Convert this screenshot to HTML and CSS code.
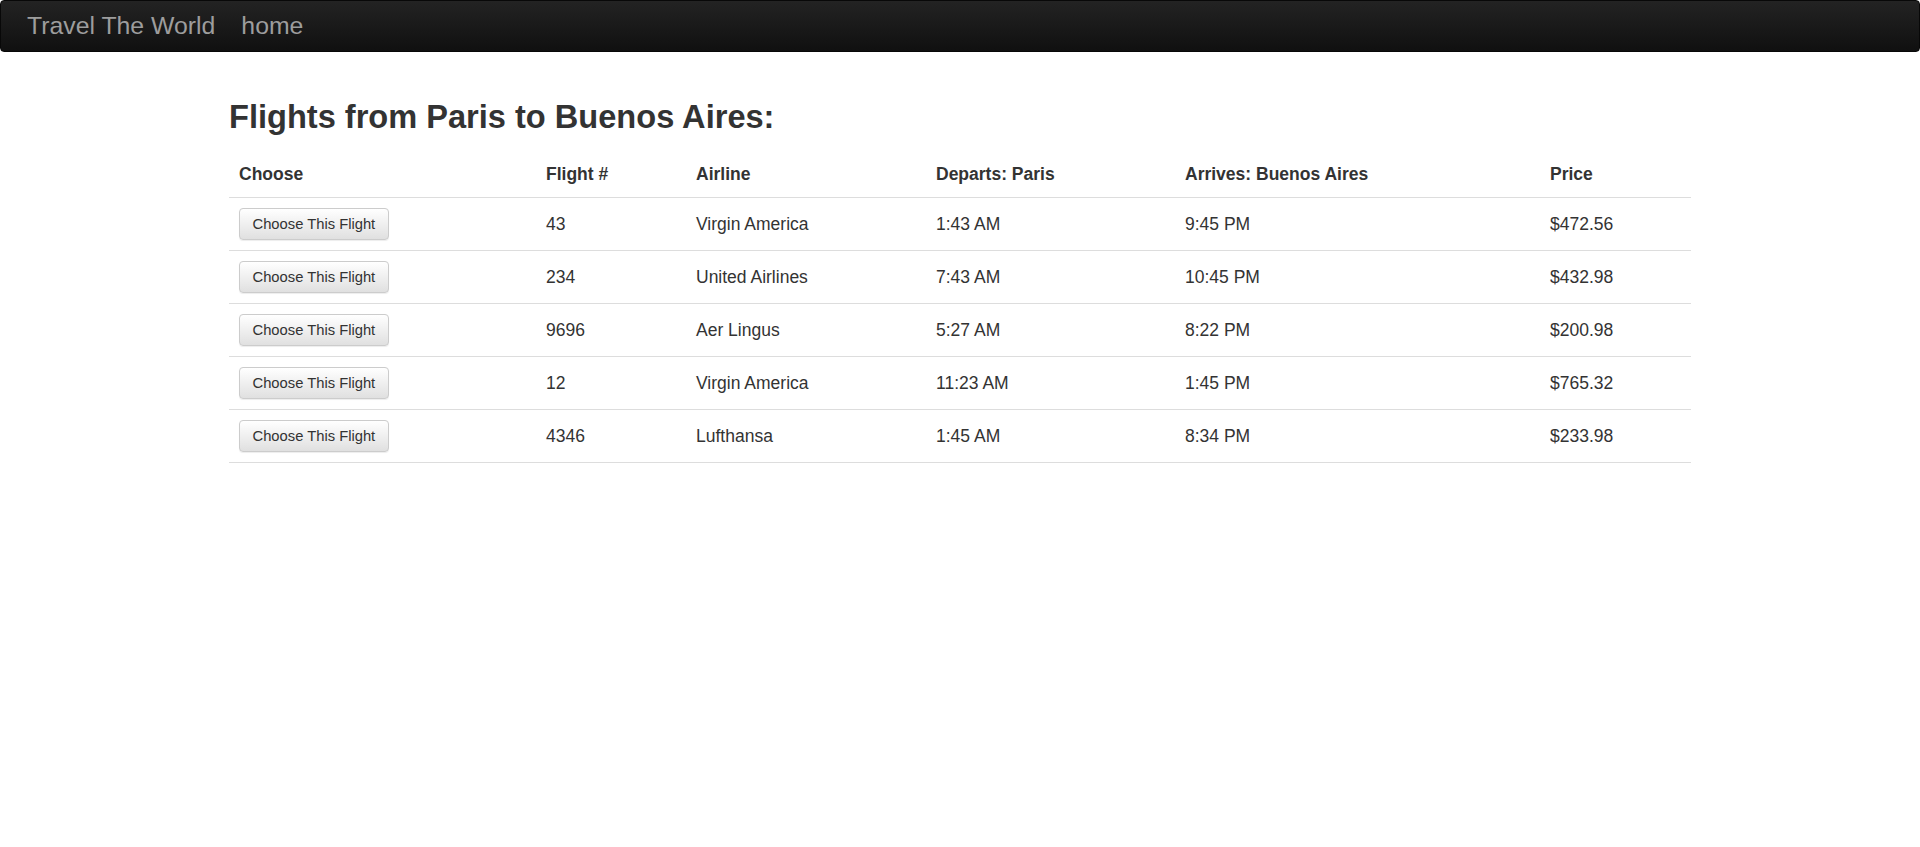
FILE: index.html
```html
<!DOCTYPE html>
<html>
<head>
<meta charset="utf-8">
<title>Travel The World</title>
<link rel="stylesheet" href="styles.css">
</head>
<body>
<nav class="navbar">
  <a class="brand" href="#">Travel The World</a>
  <a class="nav-link" href="#">home</a>
</nav>
<main class="container">
  <h3 class="title">Flights from Paris to Buenos Aires:</h3>
  <table class="flights">
    <colgroup>
      <col class="c1"><col class="c2"><col class="c3"><col class="c4"><col class="c5"><col class="c6">
    </colgroup>
    <thead>
      <tr><th>Choose</th><th>Flight #</th><th>Airline</th><th>Departs: Paris</th><th>Arrives: Buenos Aires</th><th>Price</th></tr>
    </thead>
    <tbody>
      <tr><td><button class="btn">Choose This Flight</button></td><td>43</td><td>Virgin America</td><td>1:43 AM</td><td>9:45 PM</td><td>$472.56</td></tr>
      <tr><td><button class="btn">Choose This Flight</button></td><td>234</td><td>United Airlines</td><td>7:43 AM</td><td>10:45 PM</td><td>$432.98</td></tr>
      <tr><td><button class="btn">Choose This Flight</button></td><td>9696</td><td>Aer Lingus</td><td>5:27 AM</td><td>8:22 PM</td><td>$200.98</td></tr>
      <tr><td><button class="btn">Choose This Flight</button></td><td>12</td><td>Virgin America</td><td>11:23 AM</td><td>1:45 PM</td><td>$765.32</td></tr>
      <tr><td><button class="btn">Choose This Flight</button></td><td>4346</td><td>Lufthansa</td><td>1:45 AM</td><td>8:34 PM</td><td>$233.98</td></tr>
    </tbody>
  </table>
</main>
</body>
</html>
```
FILE: styles.css
```css
* { box-sizing: border-box; }
html, body {
  margin: 0;
  padding: 0;
  background: #fff;
}
body {
  font-family: "Liberation Sans", Arial, sans-serif;
  font-size: 17.5px;
  line-height: 25px;
  color: #333;
}
.navbar {
  display: flex;
  align-items: center;
  height: 52px;
  padding: 0 0 0 26px;
  background: linear-gradient(to bottom, #232323 0%, #101010 100%);
  border: 1px solid #080808;
  border-radius: 4px;
}
.brand, .nav-link {
  color: #9d9d9d;
  text-decoration: none;
  font-size: 24.8px;
  line-height: 30px;
}
.brand { margin-right: 26px; }
.container {
  width: 1462px;
  margin: 0 auto;
}
.title {
  margin: 47px 0 17px;
  font-size: 32.6px;
  line-height: 36px;
  font-weight: bold;
  color: #333;
}
.flights {
  width: 100%;
  border-collapse: collapse;
  border-spacing: 0;
}
.c1 { width: 307px; }
.c2 { width: 150px; }
.c3 { width: 240px; }
.c4 { width: 249px; }
.c5 { width: 365px; }
.c6 { width: 151px; }
.flights th, .flights td {
  padding: 10px;
  text-align: left;
  vertical-align: middle;
  border-bottom: 1px solid #ddd;
}
.flights th {
  font-weight: bold;
}
.btn {
  font-family: "Liberation Sans", Arial, sans-serif;
  font-size: 14.75px;
  line-height: 30px;
  height: 32px;
  padding: 0 12.5px;
  color: #333;
  background: linear-gradient(to bottom, #ffffff 0%, #e0e0e0 100%);
  border: 1px solid #ccc;
  border-radius: 4px;
  box-shadow: inset 0 1px 0 rgba(255,255,255,.15), 0 1px 1px rgba(0,0,0,.075);
  display: block;
  cursor: pointer;
}
```
